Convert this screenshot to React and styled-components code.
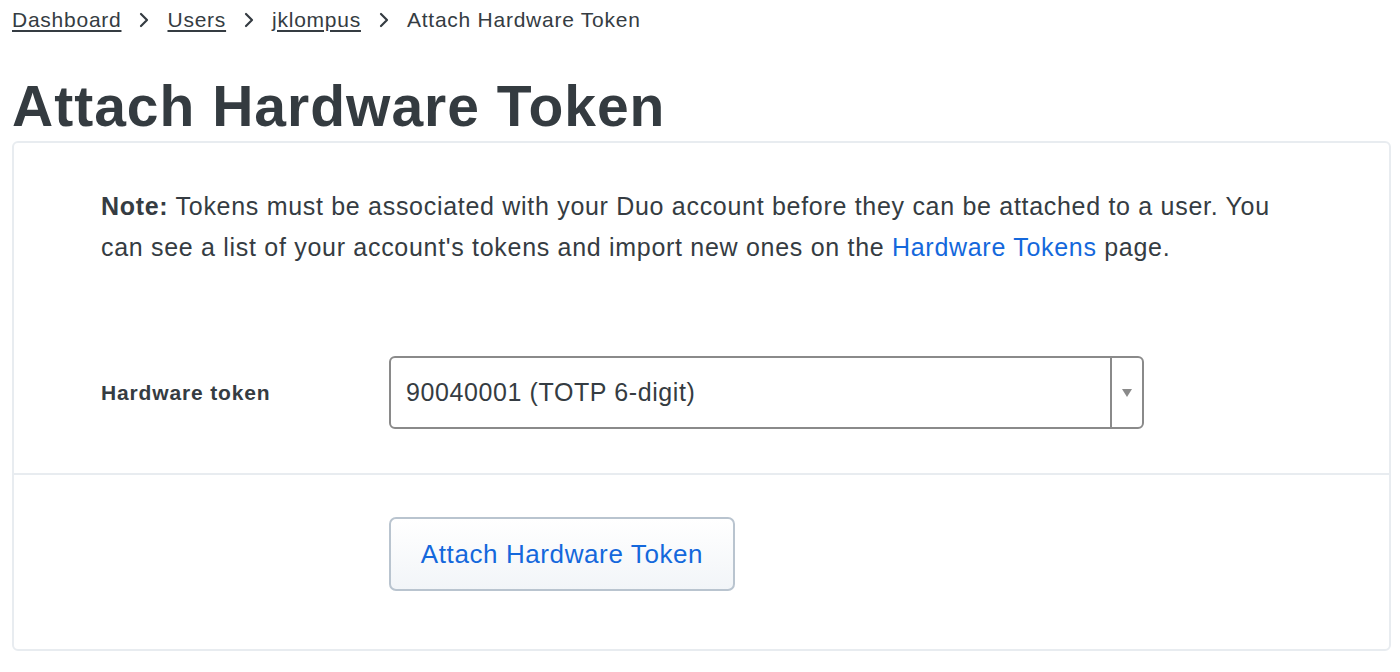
import React from 'react';
import styled, { createGlobalStyle } from 'styled-components';

const GlobalStyle = createGlobalStyle`
    body {
        margin: 0;
        background: #ffffff;
        font-family: "Liberation Sans", Arial, sans-serif;
        color: #353c42;
    }
`;

function Chevron() {
    return (
        <svg width="10" height="16" viewBox="0 0 10 16" fill="none">
            <path d="M2 2 L8 8 L2 14" stroke="#353c42" strokeWidth="2.2" strokeLinecap="round" strokeLinejoin="round" />
        </svg>
    );
}

function App() {
    const crumbs = ['Dashboard', 'Users', 'jklompus'];

    return (
        <Page>
            <GlobalStyle />
            <Breadcrumbs>
                {crumbs.map((c) => (
                    <React.Fragment key={c}>
                        <CrumbLink href="#">{c}</CrumbLink>
                        <Chevron />
                    </React.Fragment>
                ))}
                <Current>Attach Hardware Token</Current>
            </Breadcrumbs>

            <Title>Attach Hardware Token</Title>

            <Card>
                <Section>
                    <Note>
                        <strong>Note:</strong> Tokens must be associated with your Duo account before they can be
                        attached to a user. You can see a list of your account's tokens and import new ones on the{' '}
                        <TextLink href="#">Hardware Tokens</TextLink> page.
                    </Note>
                    <FormRow>
                        <Label>Hardware token</Label>
                        <Select>
                            <SelectValue>90040001 (TOTP 6-digit)</SelectValue>
                            <SelectArrow>
                                <svg width="10" height="8" viewBox="0 0 10 8">
                                    <path d="M0 0 H10 L5 8 Z" fill="#8a8a8a" />
                                </svg>
                            </SelectArrow>
                        </Select>
                    </FormRow>
                </Section>
                <Footer>
                    <Button>Attach Hardware Token</Button>
                </Footer>
            </Card>
        </Page>
    );
}

export default App;

const Page = styled.div`
    padding: 0 9px 0 12px;
`;

const Breadcrumbs = styled.nav`
    display: flex;
    align-items: center;
    gap: 18px;
    height: 40px;
    font-size: 21px;
    letter-spacing: 0.75px;
`;

const CrumbLink = styled.a`
    color: #353c42;
    text-decoration: underline;
    text-underline-offset: 3px;
    text-decoration-thickness: 1.5px;
`;

const Current = styled.span`
    color: #353c42;
`;

const Title = styled.h1`
    margin: 34px 0 3px;
    font-size: 57px;
    line-height: 64px;
    font-weight: 700;
    letter-spacing: 1px;
    color: #343b40;
`;

const Card = styled.div`
    border: 2px solid #e8ecf0;
    border-radius: 6px;
`;

const Section = styled.div`
    padding: 43px 88px 44px 87px;
`;

const Note = styled.p`
    margin: 0 0 88px;
    max-width: 1190px;
    font-size: 25px;
    line-height: 41px;
    letter-spacing: 0.7px;
    color: #353c42;

    strong {
        font-weight: 700;
    }
`;

const TextLink = styled.a`
    color: #1468dc;
    text-decoration: none;
`;

const FormRow = styled.div`
    display: flex;
    align-items: center;
`;

const Label = styled.label`
    width: 288px;
    font-size: 21px;
    font-weight: 700;
    letter-spacing: 0.85px;
    color: #353c42;
`;

const Select = styled.div`
    display: flex;
    width: 755px;
    height: 73px;
    box-sizing: border-box;
    border: 2px solid #8a8a8a;
    border-radius: 6px;
    background: #ffffff;
`;

const SelectValue = styled.div`
    flex: 1;
    display: flex;
    align-items: center;
    padding-left: 15px;
    font-size: 25px;
    letter-spacing: 0.6px;
    color: #353c42;
`;

const SelectArrow = styled.div`
    width: 30px;
    display: flex;
    align-items: center;
    justify-content: center;
    border-left: 2px solid #8a8a8a;
`;

const Footer = styled.div`
    border-top: 2px solid #e8ecf0;
    padding: 42px 88px 58px 375px;
`;

const Button = styled.button`
    all: unset;
    box-sizing: border-box;
    display: inline-flex;
    align-items: center;
    justify-content: center;
    width: 346px;
    height: 74px;
    border: 2px solid #b9c4cf;
    border-radius: 7px;
    background: linear-gradient(#ffffff, #f2f5f8);
    font-family: "Liberation Sans", Arial, sans-serif;
    font-size: 26px;
    letter-spacing: 0.6px;
    color: #1468dc;
    cursor: pointer;
`;
